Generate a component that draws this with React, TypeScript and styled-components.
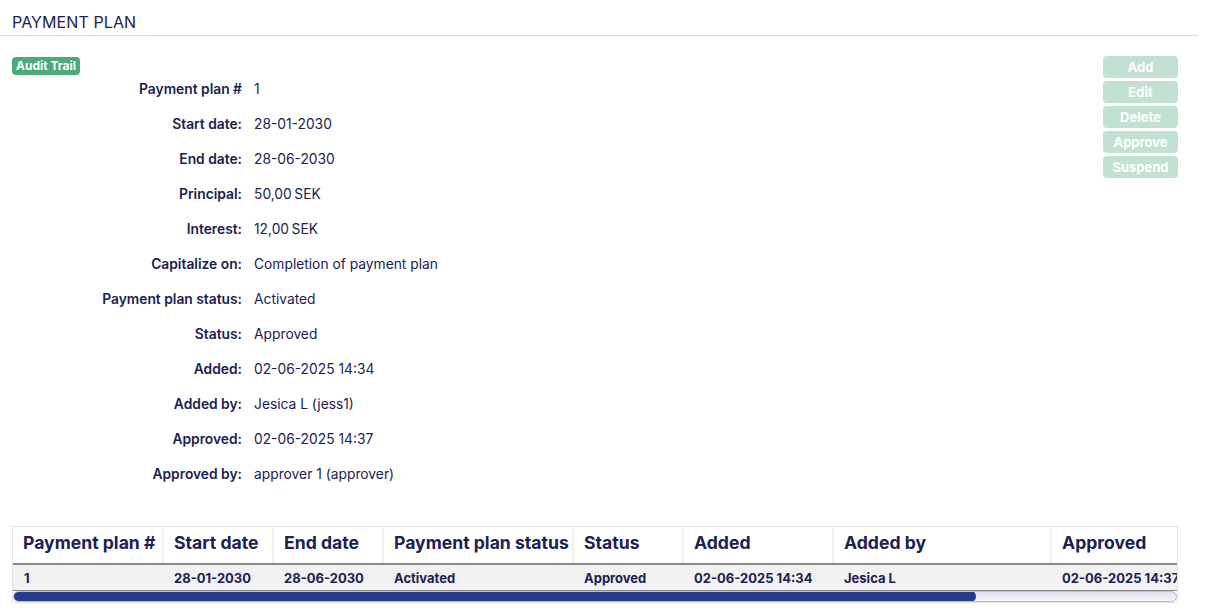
import React from 'react';
import styled, { createGlobalStyle } from 'styled-components';

const GlobalStyle = createGlobalStyle`
  html, body {
    margin: 0;
    padding: 0;
    background: #ffffff;
    font-family: Inter, "Noto Sans", sans-serif;
    color: #1c2150;
  }
`;

const Page = styled.div`
  width: 1206px;
  display: flex;
  flex-direction: column;
`;

const TitleBar = styled.div`
  height: 36px;
  box-sizing: border-box;
  margin-right: 8px;
  padding: 12px 12px 0;
  border-bottom: 1px solid #dedede;
`;

const Title = styled.h1`
  margin: 0;
  font-size: 16px;
  line-height: 20px;
  font-weight: 400;
  letter-spacing: 0.1px;
`;

const Body = styled.div`
  display: flex;
  flex-direction: column;
  padding: 20px 28px 0 12px;
`;

const TopSection = styled.div`
  display: flex;
  justify-content: space-between;
  align-items: flex-start;
`;

const LeftColumn = styled.div`
  display: flex;
  flex-direction: column;
  align-items: flex-start;
`;

const Badge = styled.span`
  display: inline-block;
  margin-top: 1px;
  background: #4caa7b;
  color: #ffffff;
  font-size: 12px;
  font-weight: 700;
  line-height: 18px;
  height: 18px;
  padding: 0 4px;
  border-radius: 4px;
`;

const DetailGrid = styled.dl`
  display: grid;
  grid-template-columns: 230px auto;
  column-gap: 12px;
  row-gap: 15px;
  margin: 4px 0 0;
  font-size: 13.8px;
  line-height: 20px;
`;

const Label = styled.dt`
  text-align: right;
  font-weight: 600;
`;

const Value = styled.dd`
  margin: 0;
  font-weight: 400;
`;

const ActionColumn = styled.div`
  display: flex;
  flex-direction: column;
  gap: 3px;
`;

const ActionButton = styled.button`
  width: 75px;
  height: 22px;
  border: none;
  border-radius: 4px;
  background: #c3e1d2;
  color: #ffffff;
  font-family: inherit;
  font-size: 13px;
  font-weight: 700;
  padding: 0;
  cursor: not-allowed;
`;

const TableFrame = styled.div`
  margin-top: 42px;
  width: 1166px;
  box-sizing: border-box;
  border: 1px solid #e2e2e2;
`;

const TableViewport = styled.div`
  overflow: hidden;
`;

const Table = styled.table`
  border-collapse: collapse;
  table-layout: fixed;
`;

const HeadCell = styled.th<{ $w: number }>`
  width: ${(p) => p.$w}px;
  text-align: left;
  font-size: 17.6px;
  font-weight: 700;
  line-height: 22px;
  height: 37px;
  padding: 0 0 4px 10px;
  box-sizing: border-box;
  border-bottom: 2px solid #8a8a8a;
  white-space: nowrap;
  & + & {
    border-left: 2px solid #f0f0f0;
  }
`;

const DataRow = styled.tr`
  background: #f1f1f1;
`;

const DataCell = styled.td`
  font-size: 13px;
  font-weight: 700;
  line-height: 16px;
  height: 26px;
  padding: 1px 0 0 11px;
  box-sizing: border-box;
  border-bottom: 1px solid #8a8a8a;
  white-space: nowrap;
  overflow: hidden;
`;

const ScrollTrack = styled.div`
  height: 11px;
  box-sizing: border-box;
  border: 1px solid #b7bfd6;
  border-radius: 6px;
  background: linear-gradient(#dde2ef, #f6f7fb);
  display: flex;
  overflow: hidden;
`;

const ScrollThumb = styled.div`
  background: #283b8b;
  border-radius: 6px;
  margin: -1px 0 0 -1px;
  height: 11px;
`;

const details: [string, string][] = [
  ['Payment plan #', '1'],
  ['Start date:', '28-01-2030'],
  ['End date:', '28-06-2030'],
  ['Principal:', '50,00\u2009SEK'],
  ['Interest:', '12,00\u2009SEK'],
  ['Capitalize on:', 'Completion of payment plan'],
  ['Payment plan status:', 'Activated'],
  ['Status:', 'Approved'],
  ['Added:', '02-06-2025 14:34'],
  ['Added by:', 'Jesica L (jess1)'],
  ['Approved:', '02-06-2025 14:37'],
  ['Approved by:', 'approver 1 (approver)'],
];

const actions = ['Add', 'Edit', 'Delete', 'Approve', 'Suspend'];

const columns: { title: string; width: number; value: string }[] = [
  { title: 'Payment plan #', width: 150, value: '1' },
  { title: 'Start date', width: 110, value: '28-01-2030' },
  { title: 'End date', width: 110, value: '28-06-2030' },
  { title: 'Payment plan status', width: 190, value: 'Activated' },
  { title: 'Status', width: 110, value: 'Approved' },
  { title: 'Added', width: 150, value: '02-06-2025 14:34' },
  { title: 'Added by', width: 218, value: 'Jesica L' },
  { title: 'Approved', width: 200, value: '02-06-2025 14:37' },
  { title: 'Approved by', width: 166, value: 'approver 1' },
];

const viewportWidth = 1164;
const contentWidth = columns.reduce((s, c) => s + c.width, 0);

export default function App() {
  const thumbPct = (viewportWidth / contentWidth) * 100;
  return (
    <Page>
      <GlobalStyle />
      <TitleBar>
        <Title>PAYMENT PLAN</Title>
      </TitleBar>
      <Body>
        <TopSection>
          <LeftColumn>
            <Badge>Audit Trail</Badge>
            <DetailGrid>
              {details.map(([label, value]) => (
                <React.Fragment key={label}>
                  <Label>{label}</Label>
                  <Value>{value}</Value>
                </React.Fragment>
              ))}
            </DetailGrid>
          </LeftColumn>
          <ActionColumn>
            {actions.map((a) => (
              <ActionButton key={a} disabled>
                {a}
              </ActionButton>
            ))}
          </ActionColumn>
        </TopSection>
        <TableFrame>
          <TableViewport>
            <Table style={{ width: contentWidth }}>
              <thead>
                <tr>
                  {columns.map((c) => (
                    <HeadCell key={c.title} $w={c.width}>
                      {c.title}
                    </HeadCell>
                  ))}
                </tr>
              </thead>
              <tbody>
                <DataRow>
                  {columns.map((c) => (
                    <DataCell key={c.title}>{c.value}</DataCell>
                  ))}
                </DataRow>
              </tbody>
            </Table>
          </TableViewport>
          <ScrollTrack>
            <ScrollThumb style={{ width: `${thumbPct}%` }} />
          </ScrollTrack>
        </TableFrame>
      </Body>
    </Page>
  );
}
